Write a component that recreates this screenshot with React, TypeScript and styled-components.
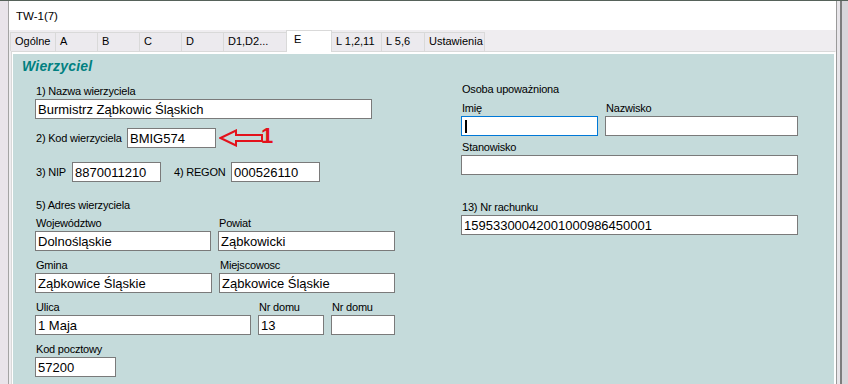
import styled, { createGlobalStyle } from "styled-components";

const GlobalStyle = createGlobalStyle`
  html, body {
    margin: 0;
    padding: 0;
    background: #fff;
  }
  body {
    font-family: "Liberation Sans", Arial, sans-serif;
    color: #000;
  }
`;

const Screen = styled.div`
  display: flex;
  width: 848px;
  height: 384px;
  overflow: hidden;
  box-sizing: border-box;
  border-top: 1px solid #56625a;
`;

const LeftStrip = styled.div`
  width: 8px;
  flex: none;
  background: #e9e4ea;
`;

const RightFrame = styled.div`
  width: 12px;
  flex: none;
  background: linear-gradient(
    to right,
    #9a9a9a 0 1px,
    #e8e6ea 1px 4px,
    #7d7d7d 4px 6px,
    #d8d6da 6px
  );
`;

const Window = styled.div`
  flex: 1;
  min-width: 0;
  display: flex;
  flex-direction: column;
  border-left: 1px solid #a3a3a3;
  background: #efedf0;
`;

const Title = styled.div`
  height: 29px;
  flex: none;
  display: flex;
  align-items: center;
  padding-left: 7px;
  background: #fff;
  font-size: 11.5px;
`;

const TabBar = styled.div`
  height: 21px;
  flex: none;
  display: flex;
  align-items: flex-end;
  padding-left: 1px;
`;

const Tab = styled.div<{ $w: number; $active?: boolean }>`
  position: relative;
  z-index: ${(p) => (p.$active ? 1 : 0)};
  box-sizing: border-box;
  width: ${(p) => p.$w + 1}px;
  height: ${(p) => (p.$active ? 22 : 19)}px;
  margin-right: -1px;
  margin-bottom: ${(p) => (p.$active ? -1 : 0)}px;
  padding-left: ${(p) => (p.$active ? 7 : 4)}px;
  border: 1px solid #d9d9d9;
  border-bottom: none;
  background: ${(p) => (p.$active ? "#fff" : "#eceaee")};
  font-size: 11px;
  line-height: ${(p) => (p.$active ? 16 : 17)}px;
  white-space: nowrap;
`;

const Panel = styled.div`
  flex: 1;
  display: flex;
  margin-left: 2px;
  padding: 2px 1px 0 1px;
  border: 1px solid #d9d9d9;
  border-right-color: #fff;
  border-bottom: none;
  background: #fff;
`;

const Content = styled.div`
  flex: 1;
  padding: 4px 0 0 9px;
  background: #c5dbdb;
`;

const Heading = styled.div`
  height: 17px;
  line-height: 17px;
  font-size: 14px;
  font-weight: bold;
  font-style: italic;
  letter-spacing: 0.2px;
  color: #008080;
`;

const Columns = styled.div`
  display: flex;
  gap: 65px;
  margin-top: 7px;
  padding-left: 13px;
`;

const Column = styled.div<{ $w: number }>`
  width: ${(p) => p.$w}px;
  display: flex;
  flex-direction: column;
`;

const Label = styled.div<{ $mt?: number }>`
  height: 14px;
  line-height: 14px;
  margin-top: ${(p) => p.$mt ?? 0}px;
  padding-left: 1px;
  font-size: 11px;
  letter-spacing: -0.2px;
  white-space: nowrap;
`;

const InlineLabel = styled(Label)<{ $w: number; $ml?: number }>`
  width: ${(p) => p.$w}px;
  margin-left: ${(p) => p.$ml ?? 0}px;
  box-sizing: border-box;
  flex: none;
`;

const TextBox = styled.div<{ $w?: number; $mt?: number; $focus?: boolean }>`
  box-sizing: border-box;
  width: ${(p) => (p.$w ? `${p.$w}px` : "100%")};
  height: 20px;
  flex: none;
  margin-top: ${(p) => p.$mt ?? 0}px;
  display: flex;
  align-items: center;
  padding: 0 2px;
  border: 1px solid ${(p) => (p.$focus ? "#0078d7" : "#7a7a7a")};
  background: #fff;
  font-size: 13px;
  white-space: nowrap;
  overflow: hidden;
`;

const Caret = styled.span`
  display: block;
  width: 2px;
  height: 13px;
  margin-left: 1px;
  background: #000;
`;

const InlineRow = styled.div<{ $mt: number }>`
  display: flex;
  align-items: center;
  margin-top: ${(p) => p.$mt}px;
`;

const FieldRow = styled.div<{ $cols: string; $mt: number }>`
  display: grid;
  grid-template-columns: ${(p) => p.$cols};
  column-gap: 7px;
  margin-top: ${(p) => p.$mt}px;
`;

const Field = styled.div<{ $mt?: number }>`
  display: flex;
  flex-direction: column;
  margin-top: ${(p) => p.$mt ?? 0}px;
`;

const ArrowIcon = styled.svg`
  flex: none;
  margin-left: 3px;
`;

const Marker = styled.span`
  margin-left: -2px;
  margin-bottom: 4px;
  font-size: 22px;
  line-height: 18px;
  font-weight: bold;
  color: #e3121b;
`;

const tabs: { name: string; w: number; active?: boolean }[] = [
  { name: "Ogólne", w: 45 },
  { name: "A", w: 42 },
  { name: "B", w: 42 },
  { name: "C", w: 42 },
  { name: "D", w: 42 },
  { name: "D1,D2...", w: 63 },
  { name: "E", w: 45, active: true },
  { name: "L 1,2,11", w: 50 },
  { name: "L 5,6", w: 43 },
  { name: "Ustawienia", w: 60 },
];

function BoxField({ label, value, mt }: { label: string; value?: string; mt?: number }) {
  return (
    <Field $mt={mt}>
      <Label>{label}</Label>
      <TextBox $mt={1}>{value}</TextBox>
    </Field>
  );
}

export default function App() {
  return (
    <>
      <GlobalStyle />
      <Screen>
        <LeftStrip />
        <Window>
          <Title>TW-1(7)</Title>
          <TabBar>
            {tabs.map((t) => (
              <Tab key={t.name} $w={t.w} $active={t.active}>
                {t.name}
              </Tab>
            ))}
          </TabBar>
          <Panel>
            <Content>
              <Heading>Wierzyciel</Heading>
              <Columns>
                <Column $w={361}>
                  <Label $mt={2}>1) Nazwa wierzyciela</Label>
                  <TextBox $w={337} $mt={1}>
                    Burmistrz Ząbkowic Śląskich
                  </TextBox>

                  <InlineRow $mt={8}>
                    <InlineLabel $w={92}>2) Kod wierzyciela</InlineLabel>
                    <TextBox $w={89}>BMIG574</TextBox>
                    <ArrowIcon width="44" height="18" viewBox="0 0 44 18">
                      <polygon
                        points="1.5,9 17,1.5 17,6 43,6 43,12 17,12 17,16.5"
                        fill="none"
                        stroke="#e3121b"
                        strokeWidth="2"
                      />
                    </ArrowIcon>
                    <Marker>1</Marker>
                  </InlineRow>

                  <InlineRow $mt={13}>
                    <InlineLabel $w={37}>3) NIP</InlineLabel>
                    <TextBox $w={89}>8870011210</TextBox>
                    <InlineLabel $w={58} $ml={12}>
                      4) REGON
                    </InlineLabel>
                    <TextBox $w={89}>000526110</TextBox>
                  </InlineRow>

                  <Label $mt={16}>5) Adres wierzyciela</Label>

                  <FieldRow $cols="176px 177px" $mt={4}>
                    <BoxField label="Województwo" value="Dolnośląskie" />
                    <BoxField label="Powiat" value="Ząbkowicki" />
                  </FieldRow>
                  <FieldRow $cols="177px 176px" $mt={7}>
                    <BoxField label="Gmina" value="Ząbkowice Śląskie" />
                    <BoxField label="Miejscowosc" value="Ząbkowice Śląskie" />
                  </FieldRow>
                  <FieldRow $cols="216px 66px 64px" $mt={7}>
                    <BoxField label="Ulica" value="1 Maja" />
                    <BoxField label="Nr domu" value="13" />
                    <BoxField label="Nr domu" />
                  </FieldRow>
                  <FieldRow $cols="81px" $mt={7}>
                    <BoxField label="Kod pocztowy" value="57200" />
                  </FieldRow>
                </Column>

                <Column $w={337}>
                  <Label>Osoba upoważniona</Label>
                  <FieldRow $cols="137px 193px" $mt={5}>
                    <Field>
                      <Label>Imię</Label>
                      <TextBox $mt={1} $focus>
                        <Caret />
                      </TextBox>
                    </Field>
                    <BoxField label="Nazwisko" />
                  </FieldRow>
                  <BoxField label="Stanowisko" mt={4} />
                  <BoxField
                    label="13) Nr rachunku"
                    value="15953300042001000986450001"
                    mt={25}
                  />
                </Column>
              </Columns>
            </Content>
          </Panel>
        </Window>
        <RightFrame />
      </Screen>
    </>
  );
}
